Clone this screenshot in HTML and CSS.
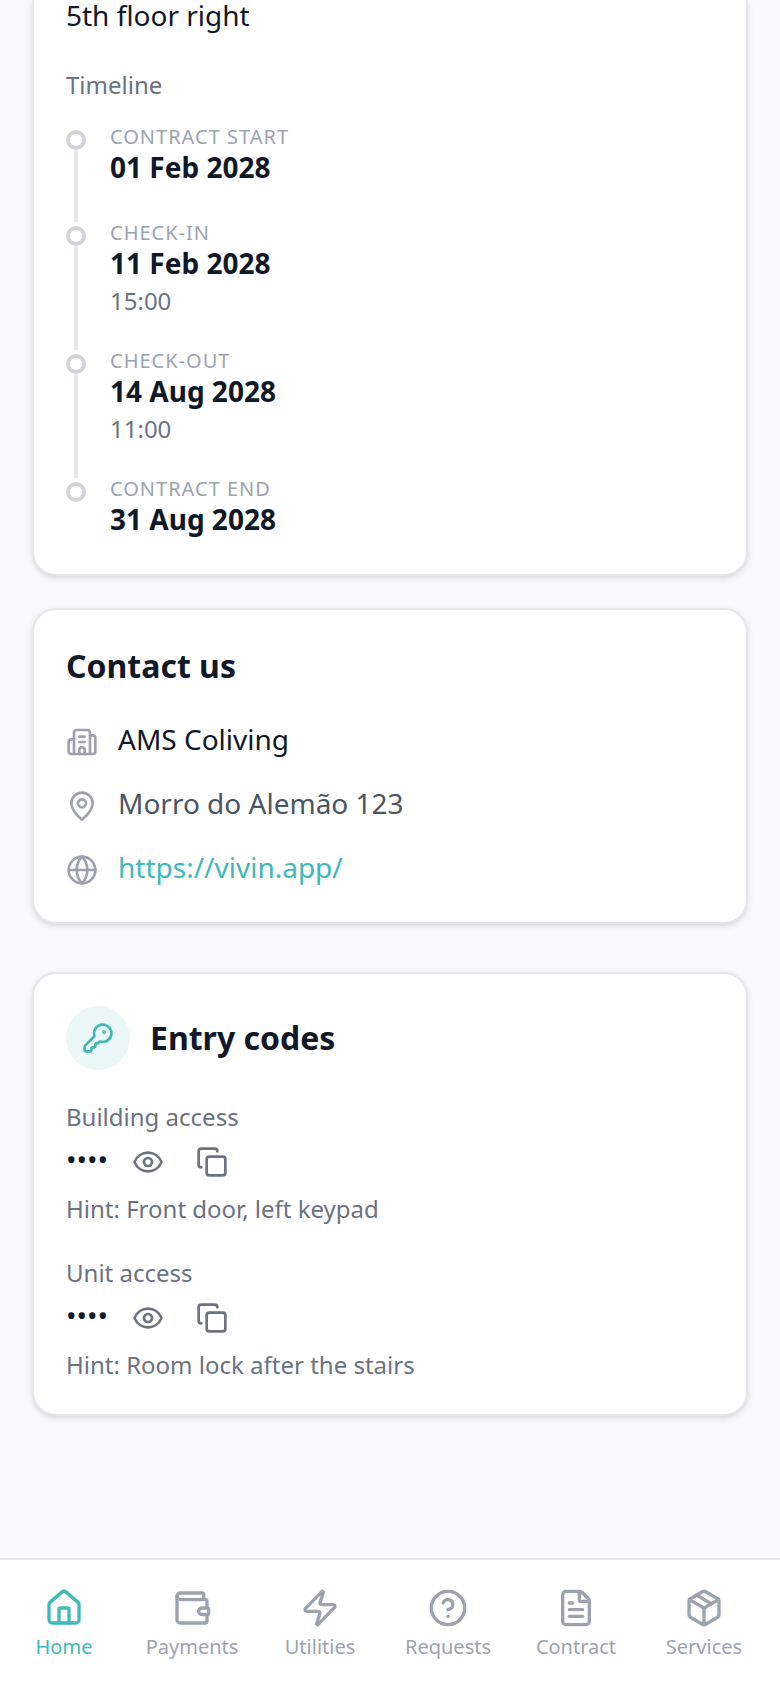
FILE: index.html
```html
<!DOCTYPE html>
<html lang="en">
<head>
    <meta charset="UTF-8">
    <meta name="viewport" content="width=device-width, initial-scale=1.0">
    <title>Home</title>
    <link rel="stylesheet" href="styles.css">
</head>
<body>
    <main class="content">
        <!-- Stay details -->
        <section class="card card-stay">
            <p class="address">5th floor right</p>
            <h3 class="label timeline-title">Timeline</h3>
            <ol class="timeline">
                <li class="step">
                    <div class="marker"><span class="dot"></span><span class="line"></span></div>
                    <div class="step-text">
                        <div class="step-name">Contract start</div>
                        <div class="step-date">01 Feb 2028</div>
                    </div>
                </li>
                <li class="step">
                    <div class="marker"><span class="dot"></span><span class="line"></span></div>
                    <div class="step-text">
                        <div class="step-name">Check-in</div>
                        <div class="step-date">11 Feb 2028</div>
                        <div class="label">15:00</div>
                    </div>
                </li>
                <li class="step">
                    <div class="marker"><span class="dot"></span><span class="line"></span></div>
                    <div class="step-text">
                        <div class="step-name">Check-out</div>
                        <div class="step-date">14 Aug 2028</div>
                        <div class="label">11:00</div>
                    </div>
                </li>
                <li class="step">
                    <div class="marker"><span class="dot"></span></div>
                    <div class="step-text">
                        <div class="step-name">Contract end</div>
                        <div class="step-date">31 Aug 2028</div>
                    </div>
                </li>
            </ol>
        </section>

        <!-- Contact -->
        <section class="card card-contact">
            <h2 class="card-title">Contact us</h2>
            <ul class="contact-list">
                <li class="contact-row">
                    <svg class="icon" viewBox="0 0 24 24"><path d="M10 12h4"/><path d="M10 8h4"/><path d="M14 21v-3a2 2 0 0 0-4 0v3"/><path d="M6 10H4a2 2 0 0 0-2 2v7a2 2 0 0 0 2 2h16a2 2 0 0 0 2-2V9a2 2 0 0 0-2-2h-2"/><path d="M6 21V5a2 2 0 0 1 2-2h8a2 2 0 0 1 2 2v16"/></svg>
                    <span class="contact-name">AMS Coliving</span>
                </li>
                <li class="contact-row">
                    <svg class="icon" viewBox="0 0 24 24"><path d="M20 10c0 4.993-5.539 10.193-7.399 11.799a1 1 0 0 1-1.202 0C9.539 20.193 4 14.993 4 10a8 8 0 0 1 16 0"/><circle cx="12" cy="10" r="3"/></svg>
                    <span>Morro do Alemão 123</span>
                </li>
                <li class="contact-row">
                    <svg class="icon" viewBox="0 0 24 24"><circle cx="12" cy="12" r="10"/><path d="M12 2a14.5 14.5 0 0 0 0 20 14.5 14.5 0 0 0 0-20"/><path d="M2 12h20"/></svg>
                    <a class="contact-link" href="https://vivin.app/">https://vivin.app/</a>
                </li>
            </ul>
        </section>

        <!-- Entry codes -->
        <section class="card card-codes">
            <div class="codes-header">
                <span class="badge">
                    <svg class="icon" viewBox="0 0 24 24"><path d="M2.586 17.414A2 2 0 0 0 2 18.828V21a1 1 0 0 0 1 1h3a1 1 0 0 0 1-1v-1a1 1 0 0 1 1-1h1a1 1 0 0 0 1-1v-1a1 1 0 0 1 1-1h.172a2 2 0 0 0 1.414-.586l.814-.814a6.5 6.5 0 1 0-4-4z"/><circle cx="16.5" cy="7.5" r=".5" fill="currentColor"/></svg>
                </span>
                <h2 class="card-title">Entry codes</h2>
            </div>
            <div class="code">
                <div class="label">Building access</div>
                <div class="code-row">
                    <span class="code-value">••••</span>
                    <button class="icon-button" type="button" aria-label="Show code">
                        <svg class="icon" viewBox="0 0 24 24"><path d="M2.062 12.348a1 1 0 0 1 0-.696 10.75 10.75 0 0 1 19.876 0 1 1 0 0 1 0 .696 10.75 10.75 0 0 1-19.876 0"/><circle cx="12" cy="12" r="3"/></svg>
                    </button>
                    <button class="icon-button" type="button" aria-label="Copy code">
                        <svg class="icon" viewBox="0 0 24 24"><rect x="8" y="8" width="14" height="14" rx="2"/><path d="M4 16c-1.1 0-2-.9-2-2V4c0-1.1.9-2 2-2h10c1.1 0 2 .9 2 2"/></svg>
                    </button>
                </div>
                <div class="label">Hint: Front door, left keypad</div>
            </div>
            <div class="code">
                <div class="label">Unit access</div>
                <div class="code-row">
                    <span class="code-value">••••</span>
                    <button class="icon-button" type="button" aria-label="Show code">
                        <svg class="icon" viewBox="0 0 24 24"><path d="M2.062 12.348a1 1 0 0 1 0-.696 10.75 10.75 0 0 1 19.876 0 1 1 0 0 1 0 .696 10.75 10.75 0 0 1-19.876 0"/><circle cx="12" cy="12" r="3"/></svg>
                    </button>
                    <button class="icon-button" type="button" aria-label="Copy code">
                        <svg class="icon" viewBox="0 0 24 24"><rect x="8" y="8" width="14" height="14" rx="2"/><path d="M4 16c-1.1 0-2-.9-2-2V4c0-1.1.9-2 2-2h10c1.1 0 2 .9 2 2"/></svg>
                    </button>
                </div>
                <div class="label">Hint: Room lock after the stairs</div>
            </div>
        </section>
    </main>

    <!-- Bottom navigation -->
    <nav class="tabs">
        <a class="tab tab-active" href="#home">
            <svg class="icon" viewBox="0 0 24 24"><path d="M15 21v-8a1 1 0 0 0-1-1h-4a1 1 0 0 0-1 1v8"/><path d="M3 10a2 2 0 0 1 .709-1.528l7-6a2 2 0 0 1 2.582 0l7 6A2 2 0 0 1 21 10v9a2 2 0 0 1-2 2H5a2 2 0 0 1-2-2z"/></svg>
            <span>Home</span>
        </a>
        <a class="tab" href="#payments">
            <svg class="icon" viewBox="0 0 24 24"><path d="M19 7V4a1 1 0 0 0-1-1H5a2 2 0 0 0 0 4h15a1 1 0 0 1 1 1v4h-3a2 2 0 0 0 0 4h3a1 1 0 0 0 1-1v-2a1 1 0 0 0-1-1"/><path d="M3 5v14a2 2 0 0 0 2 2h15a1 1 0 0 0 1-1v-4"/></svg>
            <span>Payments</span>
        </a>
        <a class="tab" href="#utilities">
            <svg class="icon" viewBox="0 0 24 24"><path d="M4 14a1 1 0 0 1-.78-1.63l9.9-10.2a.5.5 0 0 1 .86.46l-1.92 6.02A1 1 0 0 0 13 10h7a1 1 0 0 1 .78 1.63l-9.9 10.2a.5.5 0 0 1-.86-.46l1.92-6.02A1 1 0 0 0 11 14z"/></svg>
            <span>Utilities</span>
        </a>
        <a class="tab" href="#requests">
            <svg class="icon" viewBox="0 0 24 24"><circle cx="12" cy="12" r="10"/><path d="M9.09 9a3 3 0 0 1 5.83 1c0 2-3 3-3 3"/><path d="M12 17h.01"/></svg>
            <span>Requests</span>
        </a>
        <a class="tab" href="#contract">
            <svg class="icon" viewBox="0 0 24 24"><path d="M6 22a2 2 0 0 1-2-2V4a2 2 0 0 1 2-2h8a2.4 2.4 0 0 1 1.704.706l3.588 3.588A2.4 2.4 0 0 1 20 8v12a2 2 0 0 1-2 2z"/><path d="M14 2v5a1 1 0 0 0 1 1h5"/><path d="M10 9H8"/><path d="M16 13H8"/><path d="M16 17H8"/></svg>
            <span>Contract</span>
        </a>
        <a class="tab" href="#services">
            <svg class="icon" viewBox="0 0 24 24"><path d="M11 21.73a2 2 0 0 0 2 0l7-4A2 2 0 0 0 21 16V8a2 2 0 0 0-1-1.73l-7-4a2 2 0 0 0-2 0l-7 4A2 2 0 0 0 3 8v8a2 2 0 0 0 1 1.73z"/><path d="M12 22V12"/><path d="M3.29 7 12 12l8.71-5"/><path d="m7.5 4.27 9 5.15"/></svg>
            <span>Services</span>
        </a>
    </nav>
</body>
</html>
```
FILE: styles.css
```css
* {
    box-sizing: border-box;
}
body {
    margin: 0;
    min-height: 100vh;
    display: flex;
    flex-direction: column;
    background: #f8f9fb;
    color: #111827;
    font-family: "Noto Sans", sans-serif;
    font-size: 28px;
    line-height: 34px;
}
h2, h3, p, ol, ul {
    margin: 0;
    padding: 0;
}
ol, ul {
    list-style: none;
}
a {
    color: inherit;
    text-decoration: none;
}
/* Line icons take the colour of their parent */
.icon {
    display: block;
    flex: none;
    width: 32px;
    height: 32px;
    fill: none;
    stroke: currentColor;
    stroke-width: 2;
    stroke-linecap: round;
    stroke-linejoin: round;
}
.content {
    flex: 1;
    padding: 0 32px;
}
.card {
    background: #fff;
    border: 2px solid #e5e7eb;
    border-radius: 24px;
    padding: 32px;
    box-shadow: 0 2px 6px rgba(0, 0, 0, 0.1), 0 2px 4px -2px rgba(0, 0, 0, 0.1);
}
.card-title {
    font-size: 32px;
    line-height: 48px;
    font-weight: 700;
}
.label {
    font-size: 24px;
    line-height: 30px;
    padding-bottom: 2px;
    font-weight: 400;
    color: #6b7280;
}
/* The stay card runs on from the top of the screen */
.card-stay {
    border-top: 0;
    border-radius: 0 0 24px 24px;
    padding-top: 0;
}
.address {
    line-height: 30px;
}
.timeline-title {
    margin: 40px 0 24px;
}
.step {
    display: flex;
    gap: 24px;
}
.marker {
    display: flex;
    flex-direction: column;
    align-items: center;
    padding-top: 4px;
}
.dot {
    width: 20px;
    height: 20px;
    border: 4px solid #d1d5db;
    border-radius: 50%;
    background: #fff;
}
.line {
    flex: 1;
    width: 4px;
    background: #e5e7eb;
}
.step-text {
    padding-bottom: 32px;
}
.step:last-child .step-text {
    padding-bottom: 0;
}
.step-name {
    font-size: 20px;
    line-height: 22px;
    letter-spacing: 1px;
    text-transform: uppercase;
    color: #9ca3af;
}
.step-date {
    line-height: 38px;
    padding-bottom: 4px;
    font-weight: 700;
}
.card-contact {
    margin-top: 32px;
}
.contact-list {
    display: grid;
    gap: 24px;
    margin-top: 32px;
}
.contact-row {
    display: flex;
    gap: 20px;
    min-height: 40px;
    color: #4b5563;
}
.contact-row .icon {
    margin-top: 4px;
    color: #9ca3af;
}
.contact-name {
    color: #111827;
}
.contact-row .contact-link {
    color: #40b9b8;
}
.card-codes {
    margin: 48px 0;
}
.codes-header {
    display: flex;
    align-items: center;
    gap: 20px;
}
.badge {
    display: flex;
    align-items: center;
    justify-content: center;
    width: 64px;
    height: 64px;
    border-radius: 50%;
    background: #ebf7f7;
    color: #40b9b8;
}
.code {
    margin-top: 32px;
}
.code-row {
    display: flex;
    align-items: center;
    gap: 16px;
    margin: 4px 0 8px;
}
.code-value {
    padding-bottom: 6px;
}
.icon-button {
    padding: 8px;
    border: 0;
    background: none;
    color: #6b7280;
    cursor: pointer;
}
.tabs {
    position: sticky;
    bottom: 0;
    display: flex;
    padding: 28px 12px 26px 0;
    border-top: 2px solid #e5e7eb;
    background: #fff;
}
.tab {
    flex: 1;
    display: flex;
    flex-direction: column;
    align-items: center;
    gap: 4px;
    font-size: 20px;
    line-height: 30px;
    color: #9ca3af;
}
.tab .icon {
    width: 40px;
    height: 40px;
}
.tab-active {
    color: #40b9b8;
}
```
